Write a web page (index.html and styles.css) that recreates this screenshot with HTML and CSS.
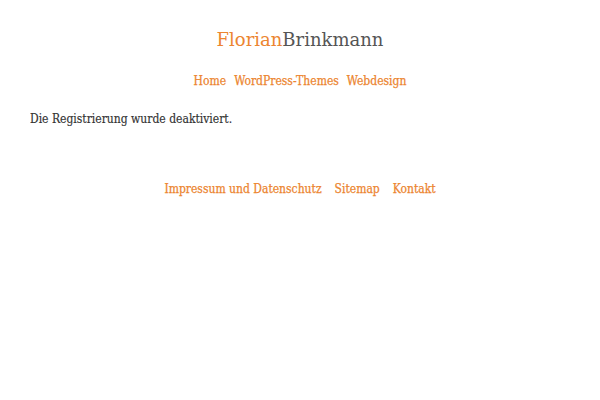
FILE: index.html
```html
<!DOCTYPE html>
<html lang="de">
<head>
<meta charset="utf-8">
<title>Florian Brinkmann</title>
<link rel="stylesheet" href="styles.css">
</head>
<body>
<header class="site-header">
  <p class="site-title"><a href="#"><span class="first">Florian</span><span class="last">Brinkmann</span></a></p>
  <nav class="main-nav">
    <a href="#">Home</a>
    <a href="#">WordPress-Themes</a>
    <a href="#">Webdesign</a>
  </nav>
</header>
<main class="content">
  <p>Die Registrierung wurde deaktiviert.</p>
</main>
<footer class="site-footer">
  <nav class="footer-nav">
    <a href="#">Impressum und Datenschutz</a>
    <a href="#">Sitemap</a>
    <a href="#">Kontakt</a>
  </nav>
</footer>
</body>
</html>
```
FILE: styles.css
```css
html, body {
  margin: 0;
  padding: 0;
  background: #fff;
}
body {
  font-family: "DejaVu Serif Condensed", "DejaVu Serif", serif;
  font-stretch: condensed;
  font-size: 12px;
  color: #333;
}
a {
  text-decoration: none;
  color: #ec8530;
}
.site-header {
  display: flex;
  flex-direction: column;
  align-items: center;
  padding-top: 28px;
}
.site-title {
  margin: 0;
  font-family: "DejaVu Serif", serif;
  font-stretch: normal;
  font-size: 18px;
  line-height: 24px;
  font-weight: 300;
}
.site-title .first { color: #ec8530; }
.site-title .last { color: #555; }
.main-nav {
  display: flex;
  gap: 8px;
  margin-top: 21px;
  line-height: 16px;
}
.main-nav a,
.footer-nav a {
  -webkit-text-stroke: 0.25px #ec8530;
}
.content {
  padding: 0 30px;
  margin-top: 22px;
}
.content p {
  margin: 0;
  line-height: 16px;
  -webkit-text-stroke: 0.15px #333;
}
.site-footer {
  margin-top: 54px;
  display: flex;
  justify-content: center;
}
.footer-nav {
  display: flex;
  gap: 13px;
  line-height: 16px;
}
```
